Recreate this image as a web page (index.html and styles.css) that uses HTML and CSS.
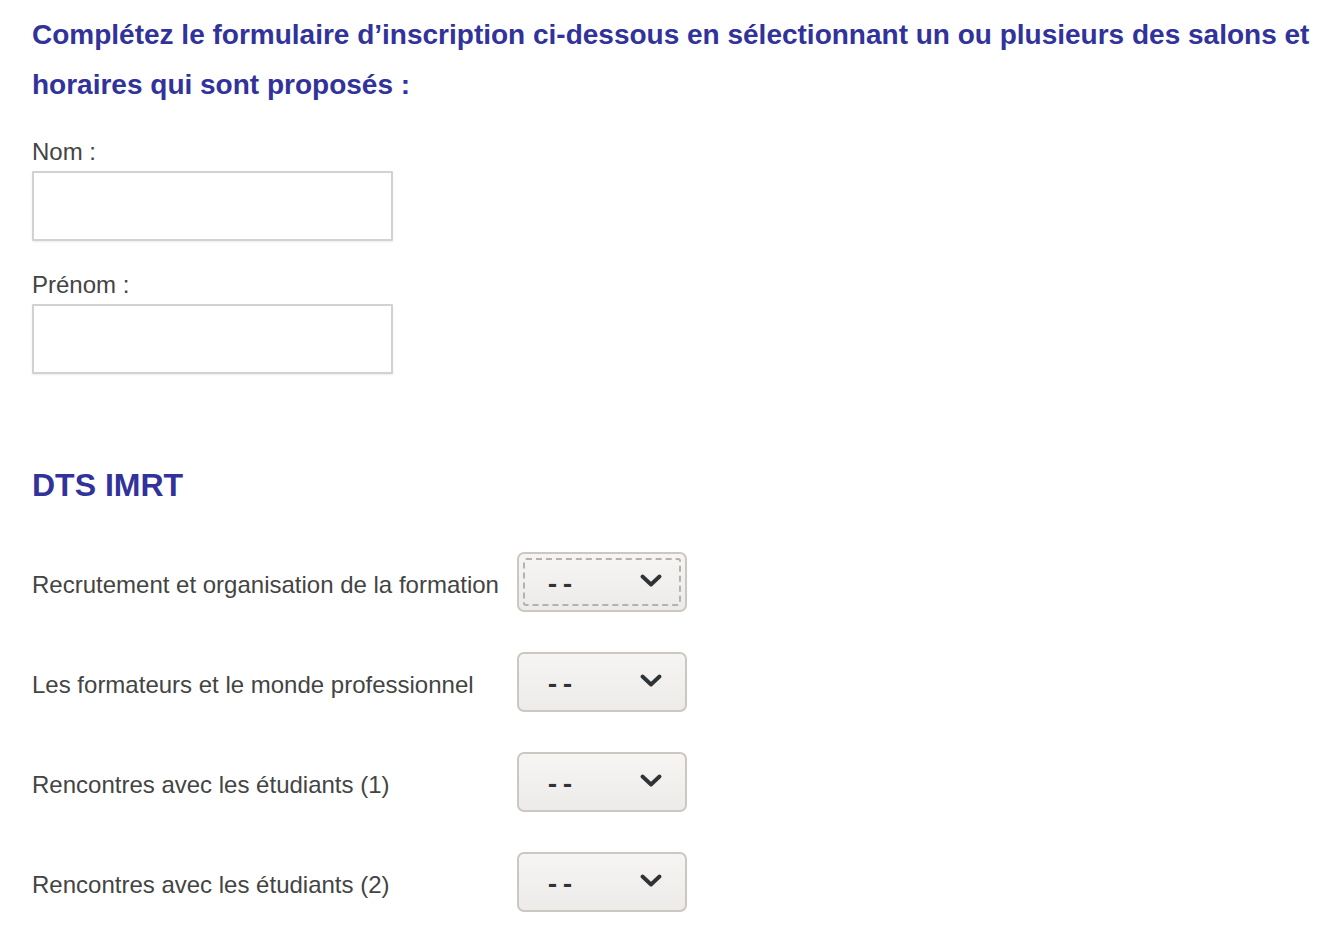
FILE: index.html
```html
<!DOCTYPE html>
<html lang="fr">
<head>
<meta charset="utf-8">
<title>Inscription</title>
<link rel="stylesheet" href="styles.css">
</head>
<body>
<main class="page">
  <h2 class="intro">Complétez le formulaire d’inscription ci-dessous en sélectionnant un ou plusieurs des salons et horaires qui sont proposés :</h2>

  <div class="field">
    <label class="field-label" for="nom">Nom :</label>
    <input class="text-input" id="nom" type="text">
  </div>
  <div class="field">
    <label class="field-label" for="prenom">Prénom :</label>
    <input class="text-input" id="prenom" type="text">
  </div>

  <h3 class="section-title">DTS IMRT</h3>

  <div class="rows">
    <div class="row">
      <span class="row-label">Recrutement et organisation de la formation</span>
      <span class="select focused"><span class="select-value">--</span><svg class="chev" viewBox="0 0 22 13" width="22" height="13"><path d="M2.5 2.5 L11 10.5 L19.5 2.5" fill="none" stroke="#2e3436" stroke-width="3.8" stroke-linecap="round" stroke-linejoin="round"/></svg></span>
    </div>
    <div class="row">
      <span class="row-label">Les formateurs et le monde professionnel</span>
      <span class="select"><span class="select-value">--</span><svg class="chev" viewBox="0 0 22 13" width="22" height="13"><path d="M2.5 2.5 L11 10.5 L19.5 2.5" fill="none" stroke="#2e3436" stroke-width="3.8" stroke-linecap="round" stroke-linejoin="round"/></svg></span>
    </div>
    <div class="row">
      <span class="row-label">Rencontres avec les étudiants (1)</span>
      <span class="select"><span class="select-value">--</span><svg class="chev" viewBox="0 0 22 13" width="22" height="13"><path d="M2.5 2.5 L11 10.5 L19.5 2.5" fill="none" stroke="#2e3436" stroke-width="3.8" stroke-linecap="round" stroke-linejoin="round"/></svg></span>
    </div>
    <div class="row">
      <span class="row-label">Rencontres avec les étudiants (2)</span>
      <span class="select"><span class="select-value">--</span><svg class="chev" viewBox="0 0 22 13" width="22" height="13"><path d="M2.5 2.5 L11 10.5 L19.5 2.5" fill="none" stroke="#2e3436" stroke-width="3.8" stroke-linecap="round" stroke-linejoin="round"/></svg></span>
    </div>
  </div>
</main>
</body>
</html>
```

FILE: styles.css
```css
html, body {
  margin: 0;
  padding: 0;
  background: #ffffff;
}

body {
  font-family: "Liberation Sans", Arial, sans-serif;
  color: #444444;
}

.page {
  padding: 10px 0 0 32px;
}

.intro {
  margin: 0;
  font-size: 28px;
  line-height: 50px;
  font-weight: bold;
  color: #32339a;
}

.field {
  display: flex;
  flex-direction: column;
  align-items: flex-start;
}

.field:first-of-type {
  margin-top: 27px;
}

.field + .field {
  margin-top: 29px;
}

.field-label {
  font-size: 24px;
  line-height: 30px;
  margin-bottom: 4px;
}

.text-input {
  box-sizing: border-box;
  width: 361px;
  height: 70px;
  margin: 0;
  border: 2px solid #d2d2d2;
  border-radius: 1px;
  background: #ffffff;
  box-shadow: 0 1px 2px rgba(0, 0, 0, 0.08);
}

.section-title {
  margin: 91px 0 0 0;
  font-size: 32px;
  line-height: 40px;
  font-weight: bold;
  color: #32339a;
}

.rows {
  margin-top: 47px;
  display: flex;
  flex-direction: column;
  gap: 40px;
}

.row {
  display: flex;
  align-items: center;
  height: 60px;
}

.row-label {
  width: 485px;
  font-size: 24px;
  line-height: 30px;
  padding-top: 6px;
}

.select {
  position: relative;
  box-sizing: border-box;
  width: 170px;
  height: 60px;
  border: 2px solid #cdc7c2;
  border-radius: 7px;
  background: linear-gradient(#f6f5f4, #edebe9);
  display: flex;
  align-items: center;
  justify-content: space-between;
  padding: 0 23px 0 26px;
}

.select.focused::after {
  content: "";
  position: absolute;
  inset: 4px;
  border: 2px dashed #b4b2ae;
  border-radius: 3px;
}

.select-value {
  font-family: "Liberation Mono", monospace;
  font-weight: bold;
  font-size: 25px;
  color: #2e3436;
  letter-spacing: 0;
  padding-top: 6px;
}

.chev {
  display: block;
  margin-top: -3px;
}
```
